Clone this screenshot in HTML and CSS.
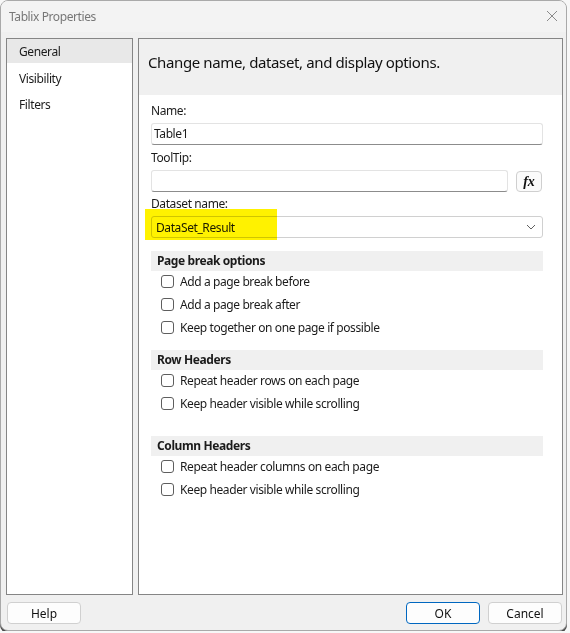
FILE: index.html
```html
<!DOCTYPE html>
<html lang="en">

<head>
  <meta charset="UTF-8">
  <title>Tablix Properties</title>
  <link rel="stylesheet" href="styles.css">
</head>

<body>
  <div class="window">
    <div class="titlebar">
      <span class="title">Tablix Properties</span>
      <svg class="close" width="12" height="12" viewBox="0 0 12 12">
        <path d="M1 1 L11 11 M11 1 L1 11" stroke="#8a8a8a" stroke-width="1" fill="none" />
      </svg>
    </div>

    <div class="content">
      <div class="nav">
        <div class="nav-item active">General</div>
        <div class="nav-item">Visibility</div>
        <div class="nav-item">Filters</div>
      </div>

      <div class="page">
        <div class="page-head">Change name, dataset, and display options.</div>
        <div class="page-body">
          <div class="field-label">Name:</div>
          <div class="textbox">Table1</div>

          <div class="field-label">ToolTip:</div>
          <div class="row">
            <div class="textbox grow"></div>
            <button class="fx-btn"><i>fx</i></button>
          </div>

          <div class="field-label">Dataset name:</div>
          <div class="select-wrap">
            <div class="select">
              <span>DataSet_Result</span>
              <svg width="10" height="6" viewBox="0 0 10 6">
                <path d="M1 1 L5 5 L9 1" stroke="#606060" stroke-width="1" fill="none" />
              </svg>
            </div>
            <div class="highlight"></div>
          </div>

          <div class="section">Page break options</div>
          <label class="check"><span class="box"></span>Add a page break before</label>
          <label class="check"><span class="box"></span>Add a page break after</label>
          <label class="check"><span class="box"></span>Keep together on one page if possible</label>

          <div class="section gap-sm">Row Headers</div>
          <label class="check"><span class="box"></span>Repeat header rows on each page</label>
          <label class="check"><span class="box"></span>Keep header visible while scrolling</label>

          <div class="section gap-lg">Column Headers</div>
          <label class="check"><span class="box"></span>Repeat header columns on each page</label>
          <label class="check"><span class="box"></span>Keep header visible while scrolling</label>
        </div>
      </div>
    </div>

    <div class="footer">
      <button class="btn">Help</button>
      <div class="footer-right">
        <button class="btn default">OK</button>
        <button class="btn">Cancel</button>
      </div>
    </div>
  </div>
</body>

</html>
```

FILE: styles.css
```css
/* General */
html,
body {
  margin: 0;
  background: #f7f7f7;
}

body {
  font-family: "Segoe UI", "Noto Sans", sans-serif;
  font-size: 12px;
  letter-spacing: -0.4px;
  color: #1b1b1b;
}

.window {
  width: 565px;
  height: 629px;
  border: 1px solid #a9a9a9;
  border-radius: 8px;
  background: #f0f0f0;
  box-shadow: 0 2px 0 #4b4b4b;
  overflow: hidden;
  display: flex;
  flex-direction: column;
}

/* Title bar */
.titlebar {
  height: 31px;
  background: #f3f3f3;
  display: flex;
  align-items: center;
  justify-content: space-between;
  padding: 0 8px 0 8px;
}

.title {
  color: #777;
}

.close {
  margin-top: -1px;
}

/* Main area */
.content {
  display: flex;
  gap: 5px;
  padding: 6px 3px 0 5px;
  height: 557px;
}

.nav {
  width: 125px;
  border: 1px solid #858585;
  background: #fff;
}

.nav-item {
  height: 26px;
  line-height: 27px;
  padding-left: 12px;
}

.nav-item.active {
  background: #e8e8e8;
  height: 24px;
  line-height: 26px;
  margin-bottom: 2px;
}

.page {
  flex: 1;
  border: 1px solid #858585;
  background: #fff;
}

.page-head {
  height: 56px;
  background: #f0f0f0;
  font-size: 15px;
  letter-spacing: -0.38px;
  line-height: 46px;
  padding-left: 9px;
  color: #111;
}

.page-body {
  padding: 8px 19px 0 12px;
}

.field-label {
  height: 16px;
  line-height: 16px;
  margin-bottom: 4px;
}

.textbox {
  height: 20px;
  line-height: 20px;
  border: 1px solid #e3e3e3;
  border-bottom-color: #8c8c8c;
  border-radius: 3px;
  padding: 0 2px;
  margin-bottom: 5px;
  background: #fff;
}

.row {
  display: flex;
  align-items: flex-start;
  gap: 8px;
}

.row .textbox {
  margin-bottom: 4px;
}

.grow {
  flex: 1;
}

.fx-btn {
  width: 26px;
  height: 21px;
  margin: 1px 1px 0 0;
  padding: 0;
  border: 1px solid #cfcfcf;
  border-radius: 4px;
  background: #fbfbfb;
  font-family: "Liberation Serif", serif;
  font-weight: bold;
  font-size: 14px;
  letter-spacing: 0;
  color: #111;
}

/* Dataset select with yellow marker */
.select-wrap {
  position: relative;
}

.select {
  height: 20px;
  border: 1px solid #d0d0d0;
  border-radius: 3px;
  display: flex;
  align-items: center;
  justify-content: space-between;
  padding: 0 6px 0 4px;
  background: #fff;
}

.highlight {
  position: absolute;
  left: -6px;
  top: -7px;
  width: 132px;
  height: 31px;
  background: #fff200;
  mix-blend-mode: multiply;
}

/* Sections */
.section {
  margin-top: 13px;
  margin-bottom: -1px;
  height: 20px;
  line-height: 20px;
  background: #f0f0f0;
  font-weight: bold;
  padding-left: 6px;
}

.section.gap-sm {
  margin-top: 11px;
}

.section.gap-lg {
  margin-top: 21px;
}

.check {
  display: flex;
  align-items: center;
  height: 23px;
  padding-left: 10px;
  gap: 6px;
}

.box {
  width: 11px;
  height: 11px;
  border: 1px solid #5e5e5e;
  border-radius: 3px;
  background: #fff;
}

/* Footer */
.footer {
  display: flex;
  justify-content: space-between;
  align-items: center;
  padding: 7px 4px 0 6px;
}

.footer-right {
  display: flex;
  gap: 8px;
}

.btn {
  width: 74px;
  height: 22px;
  padding: 0;
  border: 1px solid #d0d0d0;
  border-radius: 4px;
  background: #fdfdfd;
  font-family: inherit;
  font-size: 12px;
  color: #111;
}

.btn.default {
  border-color: #0067c0;
}
```
